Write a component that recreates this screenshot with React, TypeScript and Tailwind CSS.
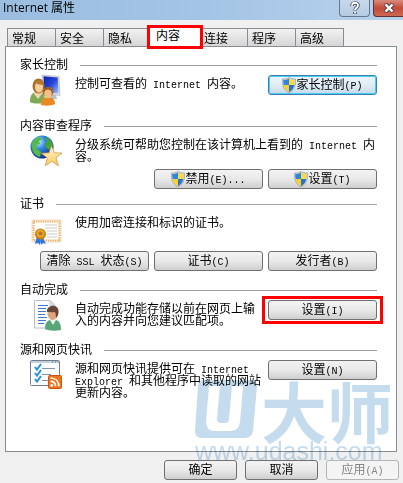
import type { ReactNode } from "react"

const tabs = ["常规", "安全", "隐私", "内容", "连接", "程序", "高级"]

// Half-width text is set a little smaller so two letters fill one ideograph
function Latin({ children }: { children: ReactNode }) {
  return <span className="font-['Liberation_Mono',monospace] text-[10px] leading-2">{children}</span>
}

function Shield() {
  return (
    <svg viewBox="0 0 14 16" className="h-4 w-3.5 shrink-0" aria-hidden="true">
      <clipPath id="shield">
        <path d="M7 1.5C5.5 2.5 3.5 3 1.3 3c0 5 .8 9.5 5.7 12 4.900-2.500 5.700-7 5.700-12C10.500 3 8.500 2.500 7 1.500z" />
      </clipPath>
      <path d="M7 .4C5.300 1.600 3 2.100.4 2c-.2 6 .8 11 6.600 13.800C12.800 13 13.800 8 13.600 2 11 2.100 8.700 1.600 7 .4z" fill="#cfd3d6" stroke="#8b9196" strokeWidth=".6" />
      <g clipPath="url(#shield)">
        <path d="M0 0h7v8H0z" fill="#2c86dc" />
        <path d="M7 0h7v8H7z" fill="#fbdb45" />
        <path d="M0 8h7v8H0z" fill="#fbd02c" />
        <path d="M7 8h7v8H7z" fill="#2474cf" />
      </g>
    </svg>
  )
}

function FamilyIcon() {
  return (
    <svg viewBox="0 0 32 32" className="size-8" aria-hidden="true">
      <defs>
        <linearGradient id="screen" x1="0" y1="0" x2="1" y2="1">
          <stop offset="0" stopColor="#0b23a8" />
          <stop offset=".5" stopColor="#2746d8" />
          <stop offset="1" stopColor="#a5c4f7" />
        </linearGradient>
      </defs>
      <path d="M12 1l17 1.500 1 19-17-2z" fill="#dfe3e6" stroke="#a4aab0" strokeWidth=".6" />
      <path d="M13.500 2.300l14.300 1.200.8 16-14.500-1.500z" fill="url(#screen)" />
      <path d="M18 21h8l1 4h-9z" fill="#b9c0c6" />
      <path d="M0 28c0-7 2-10 8-10 5 0 7 3 7 10-4 2-11 2-15 0z" fill="#7cab54" />
      <path d="M4 20l4 5 4-5-1-3H5z" fill="#f2d3ae" />
      <ellipse cx="8.500" cy="12" rx="6" ry="7.500" fill="#a86e28" />
      <ellipse cx="9" cy="13" rx="4" ry="5.500" fill="#f7cfa0" />
      <path d="M4 12c0-7 9-8 10-1-4 0-7-1-8-2z" fill="#b87a2d" />
      <path d="M11 31c0-5 2-8 7-8s7 3 7 7c-3 2-11 2-14 1z" fill="#e88a23" />
      <circle cx="18" cy="18" r="5.300" fill="#a35f1e" />
      <ellipse cx="18" cy="20" rx="3.800" ry="4.200" fill="#f3c08b" />
    </svg>
  )
}

function GlobeIcon() {
  return (
    <svg viewBox="0 0 32 32" className="size-8" aria-hidden="true">
      <defs>
        <radialGradient id="globe" cx=".35" cy=".28" r=".75">
          <stop offset="0" stopColor="#c5ecff" />
          <stop offset=".4" stopColor="#3288df" />
          <stop offset="1" stopColor="#122c86" />
        </radialGradient>
        <linearGradient id="star" x1="0" y1="0" x2="0" y2="1">
          <stop offset="0" stopColor="#fff7d8" />
          <stop offset="1" stopColor="#f8cb5b" />
        </linearGradient>
      </defs>
      <circle cx="12" cy="12" r="11.500" fill="url(#globe)" />
      <path d="M2 8c2-4 5-6 8-6l2 2-3 2 1 3-4 1 1 4 4 3-1 5C5 21 1 16 2 8z" fill="#55b947" />
      <path d="M15 2c4 1 7 4 8 8l-3 5-4-2-1-4 2-3z" fill="#43a43c" />
      <path d="M21.500 10.500l2.800 7.300 7.700.3-6.100 4.700 2.500 8-6.600-4.500-6.500 4.500 2-7.800-6-4.700 7.700-.5z" fill="url(#star)" stroke="#c88a35" strokeWidth=".7" />
    </svg>
  )
}

function CertificateIcon() {
  return (
    <svg viewBox="0 -3 32 36" className="h-9 w-8" aria-hidden="true">
      <path d="M2 4h29v22H2z" fill="#fffdf8" stroke="#eadbcf" />
      <path d="M3.500 5.500h26v19h-26z" fill="none" stroke="#eeb568" strokeWidth="2" strokeDasharray="1.500 .8" />
      <path d="M15 9h12M15 12h12M17 15h10M17 18h10M17 21h10" stroke="#c9ccd3" />
      <path d="M7 20l-2 8 3-1 2 2 1-8zM12 20l4 8-3-1-2 2-1-8z" fill="#2f73df" />
      <circle cx="10.500" cy="18" r="5.500" fill="#c47b12" />
      <circle cx="10.500" cy="17.500" r="4" fill="#e7a62c" />
      <circle cx="10.500" cy="17.500" r="2" fill="#ba7514" />
    </svg>
  )
}

function PersonPageIcon() {
  return (
    <svg viewBox="0 0 32 32" className="size-8" aria-hidden="true">
      <path d="M4.500 1.500H20l5 5V29H4.500z" fill="#fafcfe" stroke="#b8c0c8" />
      <path d="M20 1.500v5h5z" fill="#dbe2e9" stroke="#b8c0c8" strokeWidth=".6" />
      <path d="M8 6.500h10M8 9.500h8M8 12.500h8M8 15.500h7M8 18.500h9M8 21.500h8M8 24.500h6" stroke="#3c79cf" />
      <path d="M15 30c0-6 2-9 8-10 6 1 8 4 8 11-5 1-12 1-16-1z" fill="#58a577" />
      <path d="M20 21l3 5 3-5-1-4h-4z" fill="#edf3ee" />
      <ellipse cx="22.500" cy="14.500" rx="5" ry="6.500" fill="#dfa47c" />
      <path d="M17 13c-1-8 13-9 11.500 1-.5 3-1.500 4-2.500 5 0-3-.5-5-1-6-3 .5-6 0-8 0z" fill="#654637" />
    </svg>
  )
}

function FeedIcon() {
  return (
    <svg viewBox="0 0 32 32" className="size-8" aria-hidden="true">
      <rect x=".5" y="1.500" width="29" height="25" rx="1" fill="#fdfeff" stroke="#707c8b" />
      <path d="M1 3h28" stroke="#c2cfdd" strokeWidth="2" />
      <path d="M22 3h1M25 3h1M27.500 3h1" stroke="#526477" />
      <path d="M12 9.500h13M12 15.500h9M12 21.500h6" stroke="#8693a1" />
      <path d="M5 8l2 2.500L11 5M5 14l2 2.500L11 11M5 20l2 2.500L11 17" fill="none" stroke="#2491dd" strokeWidth="2" />
      <rect x="18.500" y="16.500" width="13" height="13" rx="1" fill="#ee7420" stroke="#cf540e" />
      <circle cx="21.700" cy="26.500" r="1.400" fill="#fff" />
      <path d="M20.500 22.300c3 0 5 2 5 5M20.500 19c5 0 8.300 3.300 8.300 8.300" fill="none" stroke="#fff" strokeWidth="1.700" />
    </svg>
  )
}

interface ButtonProps {
  label: string
  shortcut?: string
  shield?: boolean
  variant?: "normal" | "focused" | "disabled"
  children?: ReactNode
}

const buttonStyles = {
  normal: "border-[#707070] from-[#f3f3f3] via-[#e9e9e9] to-[#cfcfcf] text-black",
  focused: "border-[#3c7fb1] from-[#eef5fa] via-[#e0edf5] to-[#c6dae8] text-black ring-1 ring-inset ring-[#4ccdf5]",
  disabled: "border-[#b5b5b5] from-[#f4f4f4] via-[#f4f4f4] to-[#f4f4f4] text-[#838383]",
}

function DialogButton({ label, shortcut, shield, variant = "normal", children }: ButtonProps) {
  return (
    <button
      type="button"
      disabled={variant === "disabled"}
      className={`flex h-5 w-full items-center justify-center whitespace-nowrap rounded-[3px] border bg-gradient-to-b leading-3 ${buttonStyles[variant]}`}
    >
      {shield && <Shield />}
      <span>
        {children ?? label}
        {shortcut && <Latin>{shortcut}</Latin>}
      </span>
    </button>
  )
}

interface SectionProps {
  title: string
  icon: ReactNode
  className: string
  action?: ReactNode
  footer?: ReactNode
  children: ReactNode
}

function Section({ title, icon, className, action, footer, children }: SectionProps) {
  return (
    <section className={className}>
      <div className="flex h-4 items-center gap-3">
        <h2>{title}</h2>
        <div className="h-px flex-1 bg-[#a0a0a0]" />
      </div>
      <div className="grid grid-cols-3 gap-x-[5px] pl-5">
        <div className={`flex ${action ? "col-span-2" : "col-span-3"}`}>
          <div className="-ml-2.5 w-[45px] shrink-0 pt-px">{icon}</div>
          <p className="min-w-0 flex-1 pt-[5px]">{children}</p>
        </div>
        {action && <div className="pt-0.5">{action}</div>}
      </div>
      {footer && <div className="grid grid-cols-3 gap-x-[5px] pl-5 pt-0.5">{footer}</div>}
    </section>
  )
}

function Watermark() {
  return (
    <div className="pointer-events-none absolute bottom-5 right-2.5 flex flex-col items-start text-[#c5dcee] mix-blend-multiply">
      <div className="flex items-center gap-1">
        <svg viewBox="0 0 62 58" className="h-[58px] w-[62px]" aria-hidden="true">
          <path d="M9 0h47q6 0 6 6l-4 45q-1 7-8 7H7q-7 0-7-7L3 6q0-6 6-6z" fill="currentColor" />
          <path d="M14 6h11l-3 33q0 4 4 4h4q4 0 4-4l3-33h11l-3 36q-1 9-10 9H20q-9 0-9-9z" fill="#fff" />
        </svg>
        <span className="font-['Noto_Sans_CJK_SC',sans-serif] text-[66px] font-bold leading-[60px]">大师</span>
      </div>
      <span className="font-['Liberation_Sans',sans-serif] text-[25px] leading-6">www.udashi.com</span>
    </div>
  )
}

export default function App() {
  return (
    <div className="relative flex min-h-screen flex-col bg-[#f0f0f0] font-['Liberation_Sans','Noto_Sans_CJK_SC',sans-serif] text-xs leading-3 text-black">
      <header className="flex h-5 items-start justify-between bg-gradient-to-r from-[#9abde0] via-[#a3c4e5] to-[#b8d2ec] pl-[3px]">
        <h1 className="font-['Open_Sans','Noto_Sans_CJK_SC',sans-serif] leading-4">Internet 属性</h1>
        <div className="flex gap-[3px]">
          <button type="button" aria-label="帮助" className="flex h-[17px] w-[31px] items-center justify-center rounded-b-sm border border-t-0 border-[#66788d] bg-gradient-to-b from-[#c8d8ea] to-[#b5cbe3]">
            <svg viewBox="0 0 12 14" className="h-3.5 w-3" aria-hidden="true">
              <path d="M3 5c0-4 6-4 6-.500C9 6.500 6 7 6 9.500M6 11v2" fill="none" stroke="#4e5660" strokeWidth="3.600" />
              <path d="M3 4.800c0-4 6-4 6-.300C9 6.500 6 7 6 9.200M6 11v1.600" fill="none" stroke="#fff" strokeWidth="1.800" />
            </svg>
          </button>
          <button type="button" aria-label="关闭" className="flex h-[17px] w-[30px] items-center justify-center rounded-bl-sm border border-r-0 border-t-0 border-[#652f31] bg-gradient-to-b from-[#d98a7d] via-[#c14b38] to-[#cf6951]">
            <svg viewBox="0 0 12 10" className="h-2.5 w-3" aria-hidden="true">
              <path d="M2 1l8 8M10 1L2 9" stroke="#59414a" strokeWidth="4.200" />
              <path d="M2.500 1.500l7 7M9.500 1.500l-7 7" stroke="#fff" strokeWidth="2.400" />
            </svg>
          </button>
        </div>
      </header>

      <nav role="tablist" className="flex items-end pl-[7px] pt-[5px]">
        {tabs.map((tab) =>
          tab === "内容" ? (
            <button key={tab} type="button" role="tab" aria-selected="true" className="relative z-10 -mx-1 -mb-[3px] h-6 w-14 border-[3px] border-[#ff0000] bg-white pb-0.5 pl-1.5 text-left">
              {tab}
            </button>
          ) : (
            <button key={tab} type="button" role="tab" aria-selected="false" className="-mr-px h-[18px] w-[49px] border border-b-0 border-[#898c95] bg-gradient-to-b from-[#f2f2f2] to-[#d6d6d6] pl-1 pt-0.5 text-left">
              {tab}
            </button>
          ),
        )}
      </nav>

      <main className="ml-[5px] mr-1.5 flex-1 border border-[#898c95] bg-white pl-3.5 pr-[19px] pt-2.5">
        <Section
          title="家长控制"
          icon={<FamilyIcon />}
          className="min-h-[61px]"
          action={<DialogButton label="家长控制" shortcut="(P)" shield variant="focused" />}
        >
          控制可查看的<Latin> Internet </Latin>内容。
        </Section>

        <Section
          title="内容审查程序"
          icon={<GlobeIcon />}
          className="min-h-[78px]"
          footer={
            <>
              <span />
              <DialogButton label="禁用" shortcut="(E)..." shield />
              <DialogButton label="设置" shortcut="(T)" shield />
            </>
          }
        >
          分级系统可帮助您控制在该计算机上看到的<Latin> Internet </Latin>内容。
        </Section>

        <Section
          title="证书"
          icon={<CertificateIcon />}
          className="min-h-[86px]"
          footer={
            <>
              <DialogButton label="清除 SSL 状态" shortcut="(S)">
                清除<Latin> SSL </Latin>状态
              </DialogButton>
              <DialogButton label="证书" shortcut="(C)" />
              <DialogButton label="发行者" shortcut="(B)" />
            </>
          }
        >
          使用加密连接和标识的证书。
        </Section>

        <Section
          title="自动完成"
          icon={<PersonPageIcon />}
          className="min-h-[60px]"
          action={
            <div className="relative">
              <DialogButton label="设置" shortcut="(I)" />
              <div className="pointer-events-none absolute -inset-x-1.5 -inset-y-1 border-[3px] border-[#ff0000]" />
            </div>
          }
        >
          自动完成功能存储以前在网页上输入的内容并向您建议匹配项。
        </Section>

        <Section
          title="源和网页快讯"
          icon={<FeedIcon />}
          className="min-h-[60px]"
          action={<DialogButton label="设置" shortcut="(N)" />}
        >
          源和网页快讯提供可在<Latin> Internet Explorer </Latin>和其他程序中读取的网站更新内容。
        </Section>
      </main>

      <footer className="flex justify-end gap-2 pb-[3px] pr-1 pt-2">
        <div className="w-[73px]">
          <DialogButton label="确定" />
        </div>
        <div className="w-[73px]">
          <DialogButton label="取消" />
        </div>
        <div className="w-[73px]">
          <DialogButton label="应用" shortcut="(A)" variant="disabled" />
        </div>
      </footer>

      <Watermark />
    </div>
  )
}
